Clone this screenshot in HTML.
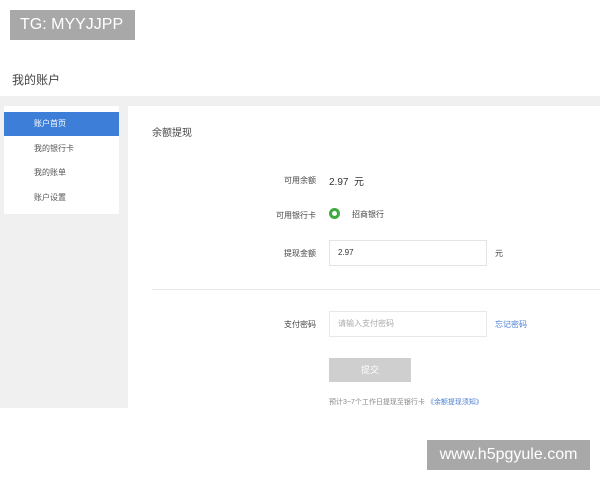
<!DOCTYPE html>
<html><head><meta charset="utf-8"><style>
*{margin:0;padding:0;box-sizing:border-box}
body{width:600px;height:480px;background:#fff;position:relative;overflow:hidden;font-family:"Liberation Sans","Noto Sans CJK SC",sans-serif;color:#333}
.a{position:absolute}
.tg{left:10px;top:10px;width:125px;height:30px;background:#a8a8a8;color:#fff;font-size:16px;line-height:30px;padding-left:10px}
.wm{left:427px;top:440px;width:163px;height:30px;background:#a8a8a8;color:#fff;font-size:16px;line-height:30px;text-align:center}
.lbl{font-size:8px;color:#444;text-align:right;width:60px}
</style></head><body>
<div class="a tg">TG: MYYJJPP</div>
<div class="a" style="left:12px;top:71px;font-size:12px;color:#444">我的账户</div>
<div class="a" style="left:0;top:96px;width:600px;height:312px;background:#f0f0f0"></div>
<div class="a" style="left:128px;top:106px;width:472px;height:302px;background:#fff"></div>
<div class="a" style="left:4px;top:106px;width:115px;height:108px;background:#fff"></div>
<div class="a" style="left:4px;top:112px;width:115px;height:24px;background:#3d7fd8"></div>
<div class="a" style="left:34px;top:118px;font-size:8px;color:#fff">账户首页</div>
<div class="a" style="left:34px;top:143px;font-size:8px;color:#555">我的银行卡</div>
<div class="a" style="left:34px;top:167px;font-size:8px;color:#555">我的账单</div>
<div class="a" style="left:34px;top:192px;font-size:8px;color:#555">账户设置</div>
<div class="a" style="left:152px;top:124px;font-size:10px;color:#444">余额提现</div>
<div class="a lbl" style="left:256px;top:175px">可用余额</div>
<div class="a" style="left:329px;top:173px;font-size:10px;color:#333">2.97&nbsp; 元</div>
<div class="a lbl" style="left:256px;top:210px">可用银行卡</div>
<div class="a" style="left:329px;top:208px;width:11px;height:11px;border:3px solid #3faa3f;border-radius:50%"></div>
<div class="a" style="left:352px;top:209px;font-size:8px;color:#444">招商银行</div>
<div class="a lbl" style="left:256px;top:248px">提现金额</div>
<div class="a" style="left:329px;top:240px;width:158px;height:26px;border:1px solid #e4e4e4;font-size:8px;line-height:24px;padding-left:8px">2.97</div>
<div class="a" style="left:495px;top:248px;font-size:8px;color:#444">元</div>
<div class="a" style="left:152px;top:289px;width:448px;height:1px;background:#e6e6e6"></div>
<div class="a lbl" style="left:256px;top:319px">支付密码</div>
<div class="a" style="left:329px;top:311px;width:158px;height:26px;border:1px solid #e8e8e8;font-size:8px;line-height:24px;padding-left:8px;color:#aaa">请输入支付密码</div>
<div class="a" style="left:495px;top:319px;font-size:8px;color:#4a7fd0">忘记密码</div>
<div class="a" style="left:329px;top:358px;width:82px;height:24px;background:#cfcfcf;color:#fff;font-size:9px;line-height:24px;text-align:center">提交</div>
<div class="a" style="left:329px;top:397px;font-size:7px;color:#888">预计3~7个工作日提现至银行卡 <span style="color:#4a7fd0">《余额提现须知》</span></div>
<div class="a wm">www.h5pgyule.com</div>
</body></html>
